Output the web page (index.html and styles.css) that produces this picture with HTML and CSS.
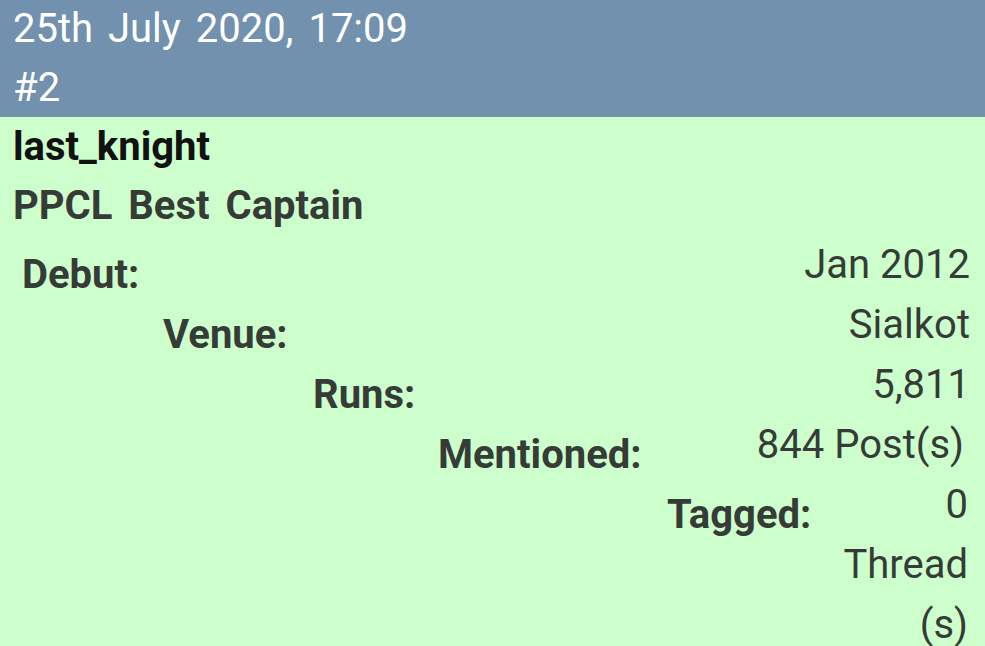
FILE: index.html
```html
<!DOCTYPE html>
<html lang="en">
<head>
    <meta charset="UTF-8">
    <meta name="viewport" content="width=device-width, initial-scale=1.0">
    <title>Post #2</title>
    <link rel="stylesheet" href="styles.css">
</head>
<body>
    <div class="post-head">
        <div class="post-date">25th July 2020, 17:09</div>
        <div class="post-num">#2</div>
    </div>
    <div class="post-user">
        <div class="username">last_knight</div>
        <div class="usertitle">PPCL Best Captain</div>
        <div class="stats">
            <div class="stat stat-1">
                <span class="label">Debut:</span>
                <span class="value">Jan 2012</span>
            </div>
            <div class="stat stat-2">
                <span class="label">Venue:</span>
                <span class="value">Sialkot</span>
            </div>
            <div class="stat stat-3">
                <span class="label">Runs:</span>
                <span class="value">5,811</span>
            </div>
            <div class="stat stat-4">
                <span class="label">Mentioned:</span>
                <span class="value">844 Post(s)</span>
            </div>
            <div class="stat stat-5">
                <span class="label">Tagged:</span>
                <span class="value">0 Thread (s)</span>
            </div>
        </div>
    </div>
</body>
</html>
```

FILE: styles.css
```css
body {
    margin: 0;
    font-family: Roboto, 'Noto Sans', Arial, sans-serif;
    font-size: 40px;
    background-color: #ccffcc;
}
.post-head {
    background-color: #7291ae;
    color: #fff;
    padding: 0 13px;
    line-height: 58.5px;
    word-spacing: 5px;
}
.post-user {
    padding: 0 15px 0 13px;
    line-height: 59px;
}
.username {
    font-weight: bold;
    color: #111;
    word-spacing: 5px;
}
.usertitle {
    font-weight: bold;
    color: #363b37;
    word-spacing: 6px;
}
.stats {
    line-height: 60px;
}
.stat {
    display: flex;
    justify-content: space-between;
    align-items: flex-start;
    color: #363b37;
}
.stat .label {
    font-weight: bold;
    padding-top: 10px;
    margin-bottom: -10px;
    flex-shrink: 0;
}
.stat .value {
    text-align: right;
}
.stat-1 { margin-left: 9px; }
.stat-2 { margin-left: 150px; }
.stat-3 { margin-left: 300px; }
.stat-4 { margin-left: 425px; }
.stat-4 .value {
    padding-right: 6px;
}
.stat-5 { margin-left: 654px; }
.stat-5 .value {
    width: 130px;
    padding-right: 2px;
}
```
